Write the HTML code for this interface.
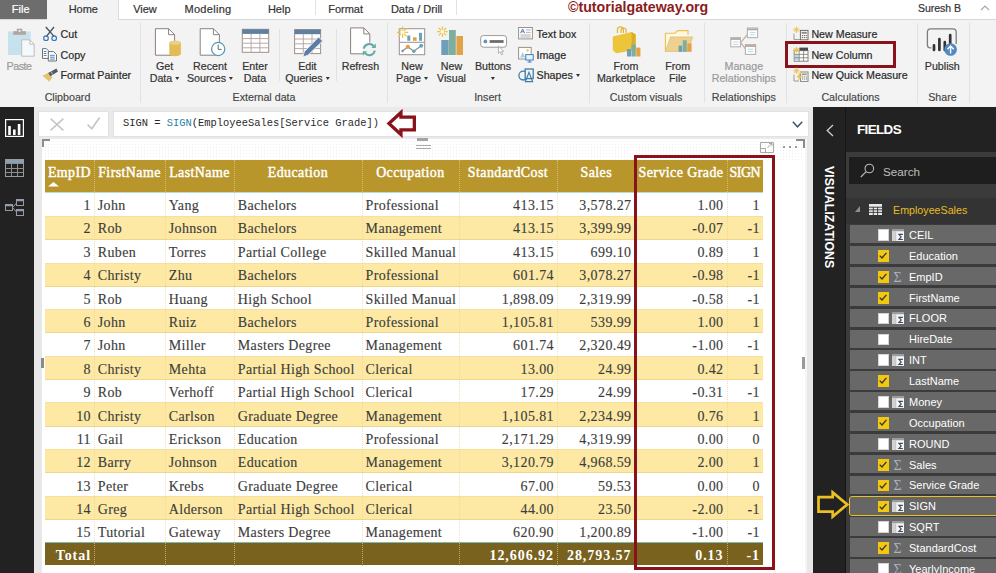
<!DOCTYPE html>
<html><head><meta charset="utf-8"><title>Power BI Desktop</title>
<style>
*{box-sizing:border-box;margin:0;padding:0}
html,body{width:996px;height:573px;overflow:hidden;background:#fff}
body{position:relative;font-family:"Liberation Sans",sans-serif;font-size:11px;color:#262626}
svg{position:absolute;overflow:visible}
/* tab row */
#tabs{position:absolute;left:0;top:0;width:996px;height:20px;background:#fff;border-bottom:1px solid #d8d8d8}
#tabs .t{position:absolute;top:1.5px;height:14px;line-height:14px;font-size:11px;text-align:center;color:#333;-webkit-text-stroke:.2px currentColor;white-space:nowrap;transform:translateX(-50%)}
#tab-file{position:absolute;left:0;top:0;width:47px;height:19px;background:#6d6d6d}
#tab-home{position:absolute;left:47px;top:0;width:71.5px;height:20px;background:#f3f3f3;border-right:1px solid #dcdcdc}
.tsep{position:absolute;top:0;width:1px;height:15px;background:#e2e2e2}
#wm{position:absolute;left:568px;top:-1px;height:16px;line-height:16px;font-size:14.2px;font-weight:bold;color:#8a1c1c;white-space:nowrap}
/* ribbon */
#ribbon{position:absolute;left:0;top:20px;width:996px;height:87px;background:#f3f3f3}
.gsep{position:absolute;top:3px;width:1px;height:80px;background:#dfe3e6}
.isep{position:absolute;top:9px;width:1px;height:52px;background:#dfe3e6}
.glabel{position:absolute;top:70px;font-size:10.7px;color:#444;-webkit-text-stroke:.15px #444;white-space:nowrap;line-height:14px;transform:translateX(-50%)}
.big{position:absolute;top:40px;font-size:10.7px;line-height:12.2px;color:#333;-webkit-text-stroke:.2px #333;text-align:center;white-space:nowrap;transform:translateX(-50%)}
.sm{position:absolute;font-size:10.7px;line-height:14px;color:#2a2a2a;-webkit-text-stroke:.2px #2a2a2a;white-space:nowrap}
.dim{color:#9a9a9a;-webkit-text-stroke:.2px #9a9a9a}
.car{display:inline-block;width:0;height:0;border-left:2.5px solid transparent;border-right:2.5px solid transparent;border-top:3px solid #333;vertical-align:middle;margin-left:3px;position:relative;top:-1px}
#hl{position:absolute;left:784.7px;top:20.8px;width:110.9px;height:27.1px;border:3px solid #8a121b}
/* left nav */
#nav{position:absolute;left:0;top:107px;width:34px;height:466px;background:#222}
/* formula bar */
#fbar{position:absolute;left:34px;top:107px;width:779px;height:32px;background:#eaeaea}
#fb1{position:absolute;left:4px;top:4px;width:71px;height:26px;background:#fff;border:1px solid #e2e2e2}
#fb2{position:absolute;left:79px;top:4px;width:696px;height:26px;background:#fff;border:1px solid #e2e2e2}
#ftext{position:absolute;left:9px;top:3.8px;font-family:"Liberation Mono",monospace;font-size:10.42px;line-height:14px;color:#2a2a2a;white-space:pre}
#ftext b{font-weight:normal;color:#2b7fa8}
/* canvas */
#gut{position:absolute;left:34px;top:139px;width:8px;height:434px;background:#e8e8e8}
#canvas{position:absolute;left:42px;top:139px;width:763px;height:434px;background:#fff}
#vscroll{position:absolute;left:805px;top:139px;width:8px;height:434px;background:#e8e8e8;border-left:2px solid #f6f6f6}
/* table */
#tbl{position:absolute;left:3px;top:21px;width:718px;font-family:"Liberation Serif",serif;font-size:14px;color:#3c3c3c}
.bgh{position:absolute;left:0;top:.4px;width:718px;height:31.75px;background:#b8962c}
.bgl{position:absolute;left:0;top:32.15px;width:718px;height:1.3px;background:#b4dbd5}
.st{position:absolute;left:0;width:718px;height:24.2px;background:#fde9a4;border-top:1px solid #f7e09f;border-bottom:1px solid #efd68f}
.bgt{position:absolute;left:0;top:382px;width:718px;height:23.3px;background:#79611e;border-top:1.4px solid #7fb9ae}
.vs{position:absolute;top:.4px;width:0;height:405.3px;border-left:1px dotted #e6d193;opacity:.65}
.r{position:absolute;left:0;width:718px;height:23.4px}
.r.hd{color:#fff;font-weight:bold;height:32px}
.r.tot{color:#fff;font-weight:bold;border-top:1px solid transparent}
.c{position:absolute;top:0;height:100%;line-height:27.6px;white-space:nowrap;letter-spacing:.34px;padding:0 3px 0 3.8px;overflow:hidden;-webkit-text-stroke:.12px currentColor}
.hd .c{-webkit-text-stroke:.45px #fff;font-weight:normal;line-height:26px;text-align:center;letter-spacing:.45px;font-size:13.9px;padding:0}
.tot .c{letter-spacing:.95px;line-height:23px;-webkit-text-stroke:0}
.c.n{text-align:right;letter-spacing:.4px}
.tot .c.n{letter-spacing:.95px}
/* right panes */
#vizpane{position:absolute;left:813px;top:107px;width:33px;height:466px;background:#222;border-right:1.5px solid #161616}
#fields{position:absolute;left:846px;top:107px;width:150px;height:466px;background:#3b3b3b;overflow:hidden}
</style></head><body>
<div id="tabs">
  <div id="tab-file"></div><div id="tab-home"></div>
  <div class="t" style="left:20.7px;color:#fff">File</div>
  <div class="t" style="left:83.3px">Home</div>
  <div class="t" style="left:145px">View</div>
  <div class="t" style="left:208px;letter-spacing:.3px">Modeling</div>
  <div class="t" style="left:279.2px">Help</div>
  <div class="tsep" style="left:315px"></div>
  <div class="t" style="left:345.6px">Format</div>
  <div class="t" style="left:416.6px">Data / Drill</div>
  <div class="tsep" style="left:456px"></div>
  <div id="wm">©tutorialgateway.org</div>
  <div class="t" style="left:939.5px;font-size:10.5px;top:.6px">Suresh B</div>
  <svg style="left:980px;top:5px" width="10" height="6" viewBox="0 0 10 6"><path d="M1 5 L5 1 L9 5" fill="none" stroke="#a8a8a8" stroke-width="1.2"/></svg>
</div>

<div id="ribbon">
  <!-- Clipboard -->
  <div class="big dim" style="left:19px;letter-spacing:-.5px">Paste</div>
  <div class="sm" style="left:60.5px;top:7px">Cut</div>
  <div class="sm" style="left:60.5px;top:27.8px">Copy</div>
  <div class="sm" style="left:60.5px;top:48.2px">Format Painter</div>
  <div class="glabel" style="left:67.5px">Clipboard</div>
  <div class="gsep" style="left:140px"></div>
  <!-- External data -->
  <div class="big" style="left:164.5px">Get<br>Data<span class="car"></span></div>
  <div class="big" style="left:210px">Recent<br>Sources<span class="car"></span></div>
  <div class="big" style="left:255px">Enter<br>Data</div>
  <div class="isep" style="left:279px"></div>
  <div class="big" style="left:307.4px">Edit<br>Queries<span class="car"></span></div>
  <div class="isep" style="left:336px"></div>
  <div class="big" style="left:360.4px">Refresh</div>
  <div class="glabel" style="left:264px">External data</div>
  <div class="gsep" style="left:387px"></div>
  <!-- Insert -->
  <div class="big" style="left:412px">New<br>Page<span class="car"></span></div>
  <div class="big" style="left:451.5px">New<br>Visual</div>
  <div class="big" style="left:493px">Buttons<br><span class="car" style="margin-left:0"></span></div>
  <div class="sm" style="left:536.5px;top:7px">Text box</div>
  <div class="sm" style="left:536.5px;top:27.8px">Image</div>
  <div class="sm" style="left:536.5px;top:48.2px">Shapes<span class="car" style="margin-left:3px"></span></div>
  <div class="glabel" style="left:487.5px">Insert</div>
  <div class="gsep" style="left:589px"></div>
  <!-- Custom visuals -->
  <div class="big" style="left:626px">From<br>Marketplace</div>
  <div class="big" style="left:677.7px">From<br>File</div>
  <div class="glabel" style="left:646px">Custom visuals</div>
  <div class="gsep" style="left:704px"></div>
  <!-- Relationships -->
  <div class="big dim" style="left:743.8px">Manage<br>Relationships</div>
  <div class="glabel" style="left:743.8px">Relationships</div>
  <div class="gsep" style="left:785.5px"></div>
  <!-- Calculations -->
  <div class="sm" style="left:811.4px;top:7px">New Measure</div>
  <div class="sm" style="left:811.4px;top:27.8px">New Column</div>
  <div class="sm" style="left:811.4px;top:48.2px">New Quick Measure</div>
  <div id="hl"></div>
  <div class="glabel" style="left:850.5px">Calculations</div>
  <div class="gsep" style="left:917px"></div>
  <!-- Share -->
  <div class="big" style="left:942.3px">Publish</div>
  <div class="glabel" style="left:942.4px">Share</div>
  <div class="gsep" style="left:969px"></div>
<svg id="rib-icons" style="left:0;top:0" width="996" height="87" viewBox="0 20 996 87">
<!-- Paste -->
<rect x="8" y="31.5" width="22.7" height="23.5" fill="#c7e2ef"/>
<rect x="13.2" y="31.2" width="12.7" height="3.6" fill="#b0a59f"/><rect x="16.8" y="28.7" width="5.5" height="3.5" fill="#b0a59f"/><rect x="18.6" y="30" width="1.9" height="1.8" fill="#f3f3f3"/>
<path d="M21.7 39.8 H29.8 L34.2 44.2 V56.2 H21.7 Z" fill="#f4fafc" stroke="#c4bcb8" stroke-width="1"/><path d="M29.8 39.8 V44.2 H34.2" fill="none" stroke="#c4bcb8" stroke-width="1"/>
<!-- Cut -->
<path d="M45.8 27 L54.3 36.6 M54 27 L46.2 36.6" stroke="#4a5560" stroke-width="1.4" fill="none"/>
<circle cx="46" cy="38.2" r="2.3" fill="none" stroke="#3b78b4" stroke-width="1.2"/><circle cx="54.2" cy="38.2" r="2.3" fill="none" stroke="#3b78b4" stroke-width="1.2"/>
<!-- Copy -->
<path d="M42.5 48.6 H46.3 L48.5 50.8 V58.4 H42.5 Z" fill="#fff" stroke="#6f6f6f" stroke-width="1"/>
<path d="M43.8 51.5 H46.5 M43.8 53.5 H46.5 M43.8 55.5 H46.5" stroke="#3b78b4" stroke-width=".9"/>
<path d="M48.3 51.6 H53.6 L56.5 54.5 V61 H48.3 Z" fill="#fff" stroke="#6f6f6f" stroke-width="1"/>
<path d="M50 55.3 H54.8 M50 57.2 H54.8 M50 59.1 H54.8" stroke="#3b78b4" stroke-width=".9"/>
<!-- Format painter -->
<path d="M42.5 75.8 L49 72.6 L52.4 77.6 L49.2 81.8 Z" fill="#e3c569"/>
<path d="M48.2 72.9 L56.4 68.6 L58 71.4 L50.4 76.2 Z" fill="#555b62"/>
<path d="M51 71.4 L52.6 74.4" stroke="#c9c9c9" stroke-width=".9"/>
<!-- Get Data -->
<path d="M155.4 28.7 H168.6 L174.6 34.7 V55.2 H155.4 Z" fill="#fff" stroke="#8d807c" stroke-width="1"/><path d="M168.6 28.7 V34.7 H174.6" fill="none" stroke="#8d807c" stroke-width="1"/>
<path d="M169.3 42.6 V54 A5.8 2.2 0 0 0 180.9 54 V42.6 Z" fill="#e2bd57"/><ellipse cx="175.1" cy="42.6" rx="5.8" ry="2.2" fill="#ecd088"/>
<!-- Recent Sources -->
<path d="M200.2 28.7 H213.4 L219.4 34.7 V55.2 H200.2 Z" fill="#fff" stroke="#8d807c" stroke-width="1"/><path d="M213.4 28.7 V34.7 H219.4" fill="none" stroke="#8d807c" stroke-width="1"/>
<circle cx="218.2" cy="49" r="6.6" fill="#fff" stroke="#4f9ab8" stroke-width="1.2"/><path d="M218.2 44.6 V49.4 H221.6" fill="none" stroke="#6b6b6b" stroke-width="1"/>
<!-- Enter Data -->
<rect x="242.3" y="29.3" width="26.4" height="23" fill="#fff" stroke="#9d8f89" stroke-width="1"/>
<rect x="242.3" y="29.3" width="26.4" height="4.6" fill="#5f7f9f"/>
<path d="M242.3 38.6 H268.7 M242.3 43.2 H268.7 M242.3 47.8 H268.7 M251.1 34 V52.3 M259.9 34 V52.3" stroke="#b7aaa3" stroke-width="1" fill="none"/>
<!-- Edit Queries -->
<rect x="294.6" y="29.6" width="26" height="24" fill="#fff" stroke="#9d8f89" stroke-width="1"/>
<rect x="294.6" y="29.6" width="26" height="4.6" fill="#5f7f9f"/>
<path d="M294.6 39 H320.6 M294.6 43.8 H320.6 M294.6 48.6 H320.6 M303.3 34.2 V53.6 M312 34.2 V53.6" stroke="#b7aaa3" stroke-width="1" fill="none"/>
<path d="M318.6 37 L322.6 41 L308 55.2 L302.8 57 L304.4 51.6 Z" fill="#5b7ea6" stroke="#f3f3f3" stroke-width=".9"/>
<!-- Refresh -->
<path d="M350.6 27.9 H363.8 L369.8 33.9 V53.8 H350.6 Z" fill="#fff" stroke="#8d807c" stroke-width="1"/><path d="M363.8 27.9 V33.9 H369.8" fill="none" stroke="#8d807c" stroke-width="1"/>
<circle cx="369.3" cy="49.6" r="7.2" fill="#f3f3f3"/>
<path d="M363.8 48.6 A5.6 5.6 0 0 1 373.6 46" fill="none" stroke="#62a9a6" stroke-width="2"/><path d="M375.8 43.6 V48 H371.4 Z" fill="#62a9a6"/>
<path d="M374.8 50.6 A5.6 5.6 0 0 1 365 53.2" fill="none" stroke="#62a9a6" stroke-width="2"/><path d="M362.8 55.6 V51.2 H367.2 Z" fill="#62a9a6"/>
<!-- New Page -->
<rect x="399.3" y="28.7" width="25.4" height="26" fill="#fff" stroke="#9d8f89" stroke-width="1"/>
<path d="M399.3 42.3 H424.7" stroke="#9d8f89" stroke-width="1"/>
<rect x="407.3" y="35.5" width="3" height="5.3" fill="#6aa5b6"/><rect x="413" y="37.3" width="3.6" height="3.5" fill="#e2a03f"/><rect x="419" y="32.8" width="3" height="8" fill="#6aa5b6"/>
<path d="M402.5 51 L407.8 46.8 L413.8 51.2 L421.2 45.8" fill="none" stroke="#7f8f9d" stroke-width="1.1"/>
<circle cx="407.8" cy="46.8" r="2.1" fill="#e2a03f"/><circle cx="413.8" cy="51.2" r="1.8" fill="#6aa5b6"/><circle cx="421.2" cy="45.8" r="2" fill="#6aa5b6"/><circle cx="402.5" cy="51" r="1.2" fill="#7f8f9d"/>
<g stroke="#e8c24f" stroke-width="1.2"><path d="M402.6 26.6 V38 M396.9 32.3 H408.3 M398.6 28.3 L406.6 36.3 M406.6 28.3 L398.6 36.3"/></g><circle cx="402.6" cy="32.3" r="2" fill="#fff7d8"/>
<!-- New Visual -->
<rect x="441.3" y="40" width="7.4" height="15" fill="#6d9fb8"/><rect x="449" y="30" width="6.8" height="25" fill="#7fae9e"/><rect x="456.4" y="36" width="6.6" height="19" fill="#e2a247"/>
<g stroke="#e8c24f" stroke-width="1.2"><path d="M442.4 26.4 V37 M437.1 31.7 H447.7 M438.7 28 L446.1 35.4 M446.1 28 L438.7 35.4"/></g><circle cx="442.4" cy="31.7" r="1.9" fill="#fff7d8"/>
<!-- Buttons -->
<rect x="480.7" y="35.6" width="25.8" height="11.6" rx="2.6" fill="#fff" stroke="#9a9a9a" stroke-width="1"/>
<circle cx="485.4" cy="41.4" r="1.9" fill="#5f93c0"/><rect x="489.6" y="40.1" width="14" height="2.8" fill="#6e6e6e"/>
<path d="M498.4 46.2 V53.4 L500.2 51.8 L501.6 54.8 L502.8 54.2 L501.5 51.4 L503.8 51.2 Z" fill="#fff" stroke="#9a9a9a" stroke-width=".7"/>
<!-- Text box -->
<rect x="518.6" y="27.5" width="13.8" height="11.4" fill="#fff" stroke="#9d8f89" stroke-width="1"/>
<path d="M520.6 33.2 L522.6 29 L524.6 33.2 M521.3 31.8 H523.9" fill="none" stroke="#3b6fb0" stroke-width=".9"/>
<path d="M526 30 H530.6 M526 32.4 H530.6 M520.4 35 H530.6 M520.4 37 H530.6" stroke="#9a9a9a" stroke-width=".8"/>
<!-- Image -->
<rect x="518.6" y="47.4" width="12.6" height="11.6" fill="#fff" stroke="#9d8f89" stroke-width="1"/>
<path d="M520 57.6 L522.8 52 L525.4 57.6 Z" fill="#a9cfe6"/><circle cx="527.6" cy="50.4" r="1.2" fill="#e8c24f"/>
<rect x="525.8" y="54.6" width="7.4" height="5.4" fill="#eaf4fb" stroke="#3b7fc0" stroke-width="1"/><path d="M527.6 62 H531.6 M529.6 60 V62" stroke="#3b7fc0" stroke-width="1"/>
<!-- Shapes -->
<circle cx="523.3" cy="75.6" r="4.4" fill="none" stroke="#3b7ea8" stroke-width="1.3"/>
<rect x="525.2" y="69" width="8" height="9.6" fill="#f3f3f3" stroke="#3b7ea8" stroke-width="1.3"/>
<path d="M529 72.4 L532.6 81.6 H525.4 Z" fill="none" stroke="#3b7ea8" stroke-width="1.2"/>
<!-- From Marketplace -->
<path d="M617.4 33 V29.8 A3 3 0 0 1 623.4 29.8 V33 M621 33 V30.6 A2.6 2.6 0 0 1 626.2 30.6 V33" fill="none" stroke="#e3b62f" stroke-width="1.2"/>
<path d="M612.8 36.6 L631.6 32 L635.6 34.4 V50 L616.4 53.2 L612.8 50.6 Z" fill="#ecc53a"/>
<path d="M631.6 32 L635.6 34.4 V50 L631.6 49 Z" fill="#d9ae2a"/>
<rect x="627" y="49" width="4" height="7.5" fill="#6d9fb8"/><rect x="631.4" y="44.6" width="4.4" height="11.9" fill="#7fae9e"/><rect x="636.2" y="47.6" width="4.2" height="8.9" fill="#e2a247"/>
<!-- From File -->
<path d="M665.4 51.4 V33.2 H675 L677.6 30.6 H688 V34.6" fill="#fff7e0" stroke="#e8c255" stroke-width="1.1"/>
<path d="M665.4 51.4 L670.6 37 H692.6 L687.6 51.4 Z" fill="#ecd193" stroke="#e3bf62" stroke-width=".8"/>
<rect x="678.6" y="45.6" width="3.6" height="6.2" fill="#6d9fb8"/><rect x="682.8" y="40.2" width="4" height="11.6" fill="#7fae9e"/><rect x="687.4" y="43.4" width="4.2" height="8.4" fill="#e2a247"/>
<!-- Manage Relationships -->
<path d="M740.6 42.6 L748.4 33.4 M740.6 42.6 L746.2 49.6" stroke="#b9b2ae" stroke-width="1.3" fill="none"/>
<rect x="730.8" y="37.6" width="9.6" height="9.2" fill="#fff" stroke="#b9b2ae" stroke-width="1.1"/><path d="M730.8 39 H740.4" stroke="#b0a8a4" stroke-width="1.8"/><path d="M733 42 H738.4 M733 44.4 H738.4" stroke="#b7dbea" stroke-width="1"/>
<rect x="747.4" y="28" width="10.2" height="9.6" fill="#fff" stroke="#b9b2ae" stroke-width="1.1"/><path d="M747.4 29.4 H757.6" stroke="#b0a8a4" stroke-width="1.8"/><path d="M749.8 32.4 H755.4 M749.8 34.8 H755.4" stroke="#b7dbea" stroke-width="1"/>
<rect x="745.4" y="44.6" width="10.2" height="9.8" fill="#fff" stroke="#b9b2ae" stroke-width="1.1"/><path d="M745.4 46 H755.6" stroke="#b0a8a4" stroke-width="1.8"/><path d="M747.8 49.2 H753.4 M747.8 51.6 H753.4" stroke="#b7dbea" stroke-width="1"/>
<!-- New Measure -->
<g stroke="#e8c24f" stroke-width=".9"><path d="M796.4 26.6 V33 M793.2 29.8 H799.6 M794.2 27.6 L798.6 32 M798.6 27.6 L794.2 32"/></g>
<path d="M794 33.6 V39.6 H800" fill="none" stroke="#9a9a9a" stroke-width="1"/>
<rect x="800.4" y="30.4" width="7.6" height="9.4" fill="#fff" stroke="#6f6a68" stroke-width="1"/><rect x="801.6" y="31.8" width="5.2" height="2" fill="#8c8c8c"/>
<path d="M801.8 35.6 H806.8 M801.8 37.6 H806.8" stroke="#555" stroke-width="1" stroke-dasharray="1.2 .7"/>
<!-- New Column -->
<g stroke="#e8c24f" stroke-width=".9"><path d="M796.4 47 V53.6 M793.1 50.3 H799.7 M794.1 48 L798.7 52.6 M798.7 48 L794.1 52.6"/></g>
<rect x="794.2" y="50.6" width="13.8" height="10.6" fill="#fff" stroke="#8b8480" stroke-width="1"/>
<rect x="799.4" y="47.6" width="8.6" height="3" fill="#4a4a4a"/>
<rect x="794.7" y="54.6" width="4.2" height="6.2" fill="#b7dbea"/>
<path d="M799.2 50.6 V61.2 M803.6 50.6 V61.2 M794.2 54.4 H808 M794.2 57.8 H808" stroke="#8b8480" stroke-width=".9"/>
<g stroke="#e8c24f" stroke-width=".9"><path d="M796.4 47 V53.6 M793.1 50.3 H799.7 M794.1 48 L798.7 52.6 M798.7 48 L794.1 52.6"/></g>
<!-- New Quick Measure -->
<g stroke="#e8c24f" stroke-width=".9"><path d="M796.4 67.6 V74 M793.2 70.8 H799.6 M794.2 68.6 L798.6 73 M798.6 68.6 L794.2 73"/></g>
<path d="M794 74.6 V81 H799" fill="none" stroke="#9a9a9a" stroke-width="1"/>
<rect x="800.6" y="72" width="7.4" height="9.4" fill="#fff" stroke="#8b8480" stroke-width="1"/><rect x="801.8" y="73.4" width="5" height="1.8" fill="#9a9a9a"/>
<path d="M802 77 H807 M802 79 H807" stroke="#777" stroke-width="1" stroke-dasharray="1.2 .7"/>
<path d="M800.6 71.6 L796.6 77.4 H799.2 L797 82.4 L802.4 75.6 H799.6 L802.4 71.6 Z" fill="#e8c24f"/>
<!-- Publish -->
<path d="M931.4 47.9 H930.6 A3.2 3.2 0 0 1 927.4 44.7 V32 A3.2 3.2 0 0 1 930.6 28.8 H953 A3.2 3.2 0 0 1 956.2 32 V44" fill="none" stroke="#7d7d7d" stroke-width="1.3"/>
<path d="M934 50 V45.4 M939.4 50 V39.2 M944.8 50 V42.2 M950.2 50 V35.2" stroke="#333" stroke-width="2.7" stroke-linecap="round"/>
<circle cx="950.6" cy="49.5" r="6.3" fill="#5189c2"/><path d="M950.6 53.6 V46.2 M947.5 49.2 L950.6 46 L953.7 49.2" fill="none" stroke="#fff" stroke-width="1.4"/>
</svg>

</div>
<div id="nav">
  <svg style="left:5px;top:12px" width="19" height="18" viewBox="0 0 19 18"><rect x="0.6" y="0.6" width="17.8" height="16.8" fill="none" stroke="#fff" stroke-width="1.2"/><rect x="3.2" y="7" width="2.6" height="9" fill="#fff"/><rect x="8" y="10.5" width="2.6" height="5.5" fill="#fff"/><rect x="12.8" y="5" width="2.6" height="11" fill="#fff"/></svg>
  <svg style="left:5px;top:52px" width="19" height="18" viewBox="0 0 19 18"><rect x="0.5" y="0.5" width="18" height="17" fill="none" stroke="#9a9a9a" stroke-width="1"/><rect x="1" y="1" width="17" height="3.5" fill="#8aa0b8"/><path d="M0.5 4.5 H18.5 M0.5 9.5 H18.5 M0.5 13.5 H18.5 M6.5 4.5 V17.5 M12.5 4.5 V17.5" stroke="#8f8f8f" stroke-width="1" fill="none"/></svg>
  <svg style="left:5px;top:92px" width="19" height="18" viewBox="0 0 19 18"><path d="M7.5 8.5 L12 3.5 M7.5 8.5 L12 13.5" stroke="#9a9a9a" stroke-width="1" fill="none"/><rect x="0.5" y="5.5" width="7" height="6" fill="#222" stroke="#9a9a9a"/><rect x="11.5" y="0.5" width="7" height="6" fill="#222" stroke="#9a9a9a"/><rect x="11.5" y="10.5" width="7" height="6" fill="#222" stroke="#9a9a9a"/><path d="M1 6.5 H7 M12 1.5 H18 M12 11.5 H18" stroke="#8aa0b8" stroke-width="1.4"/></svg>
</div>
<div id="fbar">
  <div id="fb1">
    <svg style="left:11.3px;top:5.6px" width="14" height="13" viewBox="0 0 14 13"><path d="M0.6 0.6 L13.4 12.4 M13.4 0.6 L0.6 12.4" stroke="#c6c6c6" stroke-width="1.6" fill="none"/></svg>
    <svg style="left:47.9px;top:5.3px" width="14" height="13" viewBox="0 0 14 13"><path d="M0.6 7.6 L4.8 11.8 L12.6 0.6" stroke="#c6c6c6" stroke-width="1.7" fill="none"/></svg>
  </div>
  <div id="fb2"><div id="ftext">SIGN = <b>SIGN</b>(EmployeeSales[Service Grade])</div>
    <svg style="left:0;top:0" width="310" height="26" viewBox="0 0 310 26"><path d="M286.95 0.5 L274.95 11.5 L286.95 22.5 L286.95 17.9 L300.35 17.9 L300.35 5.1 L286.95 5.1 Z" fill="#fff" stroke="#8a121b" stroke-width="3.3" stroke-linejoin="miter"/></svg>
    <svg style="left:677.8px;top:8.8px" width="11" height="7" viewBox="0 0 11 7"><path d="M0.8 0.8 L5.5 5.8 L10.2 0.8" stroke="#44546a" stroke-width="1.5" fill="none"/></svg>
  </div>
</div>
<div id="gut"></div>
<div id="canvas">
  <div style="position:absolute;left:2px;top:1px;width:759px;height:20px;background-image:radial-gradient(circle,#efefef .6px,transparent .8px);background-size:3px 3px"></div>
  <div style="position:absolute;left:0;top:0;width:8px;height:2px;background:#8c8c8c"></div><div style="position:absolute;left:0;top:0;width:2px;height:8px;background:#8c8c8c"></div>
  <div style="position:absolute;left:754px;top:0;width:9px;height:2px;background:#8c8c8c"></div><div style="position:absolute;left:761px;top:0;width:2px;height:9px;background:#8c8c8c"></div>
  <div style="position:absolute;left:375px;top:-.6px;width:11px;height:2.4px;background:#a4a4a4"></div>
  <div style="position:absolute;left:373.5px;top:5.8px;width:15px;height:1px;background:#a8a8a8"></div>
  <div style="position:absolute;left:373.5px;top:9.2px;width:15px;height:1px;background:#a8a8a8"></div>
  <svg style="left:718px;top:3px" width="14" height="11" viewBox="0 0 14 11"><path d="M0.5 0.5 H13.5 V10.5 H0.5 Z M0.5 6.5 H5.5 V10.5 M7.5 5.5 L12 1.5 M9 1.5 H12 V4.2" fill="none" stroke="#a9a9a9" stroke-width="1"/></svg>
  <div style="position:absolute;left:741px;top:7px;width:2px;height:2px;background:#9a9a9a;box-shadow:6px 0 0 #9a9a9a,12px 0 0 #9a9a9a"></div>
<div id="tbl">
<div class="bgh"></div><div class="bgl"></div>
<div class="st" style="top:55.92px"></div><div class="st" style="top:102.56px"></div><div class="st" style="top:149.20px"></div><div class="st" style="top:195.84px"></div><div class="st" style="top:242.48px"></div><div class="st" style="top:289.12px"></div><div class="st" style="top:335.76px"></div>
<div class="bgt"></div>
<div class="vs" style="left:49px"></div><div class="vs" style="left:120px"></div><div class="vs" style="left:189px"></div><div class="vs" style="left:316.8px"></div><div class="vs" style="left:414px"></div><div class="vs" style="left:512px"></div><div class="vs" style="left:590.5px"></div><div class="vs" style="left:681.5px"></div>
<div class="r hd" style="top:0"><div class="c" style="left:0px;width:49px">EmpID</div><div class="c" style="left:49px;width:71px">FirstName</div><div class="c" style="left:120px;width:69px">LastName</div><div class="c" style="left:189px;width:127.8px">Education</div><div class="c" style="left:316.8px;width:97.2px">Occupation</div><div class="c" style="left:414px;width:98px">StandardCost</div><div class="c" style="left:512px;width:78.5px">Sales</div><div class="c" style="left:590.5px;width:91px">Service Grade</div><div class="c" style="left:681.5px;width:36.5px;letter-spacing:-.5px">SIGN</div></div>
<div class="r" style="top:32.00px"><div class="c n" style="left:0px;width:49px">1</div><div class="c" style="left:49px;width:71px">John</div><div class="c" style="left:120px;width:69px">Yang</div><div class="c" style="left:189px;width:127.8px">Bachelors</div><div class="c" style="left:316.8px;width:97.2px">Professional</div><div class="c n" style="left:414px;width:98px">413.15</div><div class="c n" style="left:512px;width:78.5px;padding-right:4px">3,578.27</div><div class="c n" style="left:590.5px;width:91px">1.00</div><div class="c n" style="left:681.5px;width:36.5px">1</div></div>
<div class="r" style="top:55.39px"><div class="c n" style="left:0px;width:49px">2</div><div class="c" style="left:49px;width:71px">Rob</div><div class="c" style="left:120px;width:69px">Johnson</div><div class="c" style="left:189px;width:127.8px">Bachelors</div><div class="c" style="left:316.8px;width:97.2px">Management</div><div class="c n" style="left:414px;width:98px">413.15</div><div class="c n" style="left:512px;width:78.5px;padding-right:4px">3,399.99</div><div class="c n" style="left:590.5px;width:91px">-0.07</div><div class="c n" style="left:681.5px;width:36.5px">-1</div></div>
<div class="r" style="top:78.78px"><div class="c n" style="left:0px;width:49px">3</div><div class="c" style="left:49px;width:71px">Ruben</div><div class="c" style="left:120px;width:69px">Torres</div><div class="c" style="left:189px;width:127.8px">Partial College</div><div class="c" style="left:316.8px;width:97.2px">Skilled Manual</div><div class="c n" style="left:414px;width:98px">413.15</div><div class="c n" style="left:512px;width:78.5px;padding-right:4px">699.10</div><div class="c n" style="left:590.5px;width:91px">0.89</div><div class="c n" style="left:681.5px;width:36.5px">1</div></div>
<div class="r" style="top:102.17px"><div class="c n" style="left:0px;width:49px">4</div><div class="c" style="left:49px;width:71px">Christy</div><div class="c" style="left:120px;width:69px">Zhu</div><div class="c" style="left:189px;width:127.8px">Bachelors</div><div class="c" style="left:316.8px;width:97.2px">Professional</div><div class="c n" style="left:414px;width:98px">601.74</div><div class="c n" style="left:512px;width:78.5px;padding-right:4px">3,078.27</div><div class="c n" style="left:590.5px;width:91px">-0.98</div><div class="c n" style="left:681.5px;width:36.5px">-1</div></div>
<div class="r" style="top:125.56px"><div class="c n" style="left:0px;width:49px">5</div><div class="c" style="left:49px;width:71px">Rob</div><div class="c" style="left:120px;width:69px">Huang</div><div class="c" style="left:189px;width:127.8px">High School</div><div class="c" style="left:316.8px;width:97.2px">Skilled Manual</div><div class="c n" style="left:414px;width:98px">1,898.09</div><div class="c n" style="left:512px;width:78.5px;padding-right:4px">2,319.99</div><div class="c n" style="left:590.5px;width:91px">-0.58</div><div class="c n" style="left:681.5px;width:36.5px">-1</div></div>
<div class="r" style="top:148.95px"><div class="c n" style="left:0px;width:49px">6</div><div class="c" style="left:49px;width:71px">John</div><div class="c" style="left:120px;width:69px">Ruiz</div><div class="c" style="left:189px;width:127.8px">Bachelors</div><div class="c" style="left:316.8px;width:97.2px">Professional</div><div class="c n" style="left:414px;width:98px">1,105.81</div><div class="c n" style="left:512px;width:78.5px;padding-right:4px">539.99</div><div class="c n" style="left:590.5px;width:91px">1.00</div><div class="c n" style="left:681.5px;width:36.5px">1</div></div>
<div class="r" style="top:172.34px"><div class="c n" style="left:0px;width:49px">7</div><div class="c" style="left:49px;width:71px">John</div><div class="c" style="left:120px;width:69px">Miller</div><div class="c" style="left:189px;width:127.8px">Masters Degree</div><div class="c" style="left:316.8px;width:97.2px">Management</div><div class="c n" style="left:414px;width:98px">601.74</div><div class="c n" style="left:512px;width:78.5px;padding-right:4px">2,320.49</div><div class="c n" style="left:590.5px;width:91px">-1.00</div><div class="c n" style="left:681.5px;width:36.5px">-1</div></div>
<div class="r" style="top:195.73px"><div class="c n" style="left:0px;width:49px">8</div><div class="c" style="left:49px;width:71px">Christy</div><div class="c" style="left:120px;width:69px">Mehta</div><div class="c" style="left:189px;width:127.8px">Partial High School</div><div class="c" style="left:316.8px;width:97.2px">Clerical</div><div class="c n" style="left:414px;width:98px">13.00</div><div class="c n" style="left:512px;width:78.5px;padding-right:4px">24.99</div><div class="c n" style="left:590.5px;width:91px">0.42</div><div class="c n" style="left:681.5px;width:36.5px">1</div></div>
<div class="r" style="top:219.12px"><div class="c n" style="left:0px;width:49px">9</div><div class="c" style="left:49px;width:71px">Rob</div><div class="c" style="left:120px;width:69px">Verhoff</div><div class="c" style="left:189px;width:127.8px">Partial High School</div><div class="c" style="left:316.8px;width:97.2px">Clerical</div><div class="c n" style="left:414px;width:98px">17.29</div><div class="c n" style="left:512px;width:78.5px;padding-right:4px">24.99</div><div class="c n" style="left:590.5px;width:91px">-0.31</div><div class="c n" style="left:681.5px;width:36.5px">-1</div></div>
<div class="r" style="top:242.51px"><div class="c n" style="left:0px;width:49px">10</div><div class="c" style="left:49px;width:71px">Christy</div><div class="c" style="left:120px;width:69px">Carlson</div><div class="c" style="left:189px;width:127.8px">Graduate Degree</div><div class="c" style="left:316.8px;width:97.2px">Management</div><div class="c n" style="left:414px;width:98px">1,105.81</div><div class="c n" style="left:512px;width:78.5px;padding-right:4px">2,234.99</div><div class="c n" style="left:590.5px;width:91px">0.76</div><div class="c n" style="left:681.5px;width:36.5px">1</div></div>
<div class="r" style="top:265.90px"><div class="c n" style="left:0px;width:49px">11</div><div class="c" style="left:49px;width:71px">Gail</div><div class="c" style="left:120px;width:69px">Erickson</div><div class="c" style="left:189px;width:127.8px">Education</div><div class="c" style="left:316.8px;width:97.2px">Professional</div><div class="c n" style="left:414px;width:98px">2,171.29</div><div class="c n" style="left:512px;width:78.5px;padding-right:4px">4,319.99</div><div class="c n" style="left:590.5px;width:91px">0.00</div><div class="c n" style="left:681.5px;width:36.5px">0</div></div>
<div class="r" style="top:289.29px"><div class="c n" style="left:0px;width:49px">12</div><div class="c" style="left:49px;width:71px">Barry</div><div class="c" style="left:120px;width:69px">Johnson</div><div class="c" style="left:189px;width:127.8px">Education</div><div class="c" style="left:316.8px;width:97.2px">Management</div><div class="c n" style="left:414px;width:98px">3,120.79</div><div class="c n" style="left:512px;width:78.5px;padding-right:4px">4,968.59</div><div class="c n" style="left:590.5px;width:91px">2.00</div><div class="c n" style="left:681.5px;width:36.5px">1</div></div>
<div class="r" style="top:312.68px"><div class="c n" style="left:0px;width:49px">13</div><div class="c" style="left:49px;width:71px">Peter</div><div class="c" style="left:120px;width:69px">Krebs</div><div class="c" style="left:189px;width:127.8px">Graduate Degree</div><div class="c" style="left:316.8px;width:97.2px">Clerical</div><div class="c n" style="left:414px;width:98px">67.00</div><div class="c n" style="left:512px;width:78.5px;padding-right:4px">59.53</div><div class="c n" style="left:590.5px;width:91px">0.00</div><div class="c n" style="left:681.5px;width:36.5px">0</div></div>
<div class="r" style="top:336.07px"><div class="c n" style="left:0px;width:49px">14</div><div class="c" style="left:49px;width:71px">Greg</div><div class="c" style="left:120px;width:69px">Alderson</div><div class="c" style="left:189px;width:127.8px">Partial High School</div><div class="c" style="left:316.8px;width:97.2px">Clerical</div><div class="c n" style="left:414px;width:98px">44.00</div><div class="c n" style="left:512px;width:78.5px;padding-right:4px">23.50</div><div class="c n" style="left:590.5px;width:91px">-2.00</div><div class="c n" style="left:681.5px;width:36.5px">-1</div></div>
<div class="r" style="top:359.46px"><div class="c n" style="left:0px;width:49px">15</div><div class="c" style="left:49px;width:71px">Tutorial</div><div class="c" style="left:120px;width:69px">Gateway</div><div class="c" style="left:189px;width:127.8px">Masters Degree</div><div class="c" style="left:316.8px;width:97.2px">Management</div><div class="c n" style="left:414px;width:98px">620.90</div><div class="c n" style="left:512px;width:78.5px;padding-right:4px">1,200.89</div><div class="c n" style="left:590.5px;width:91px">-1.00</div><div class="c n" style="left:681.5px;width:36.5px">-1</div></div>
<div class="r tot" style="top:382.85px"><div class="c n" style="left:0px;width:49px">Total</div><div class="c n" style="left:49px;width:71px"></div><div class="c n" style="left:120px;width:69px"></div><div class="c n" style="left:189px;width:127.8px"></div><div class="c n" style="left:316.8px;width:97.2px"></div><div class="c n" style="left:414px;width:98px">12,606.92</div><div class="c n" style="left:512px;width:78.5px;padding-right:4px">28,793.57</div><div class="c n" style="left:590.5px;width:91px">0.13</div><div class="c n" style="left:681.5px;width:36.5px">-1</div></div>
</div>

  <svg style="left:5.6px;top:43.2px" width="11" height="4.6" viewBox="0 0 11 4.6"><path d="M0 4.6 L5.5 0 L11 4.6 Z" fill="#fff"/></svg>
  <div style="position:absolute;left:592.3px;top:16px;width:140.7px;height:415px;border:3.2px solid #8a121b"></div>
  <div style="position:absolute;left:760px;top:218px;width:4px;height:12px;background:#9a9a9a"></div>
  <div style="position:absolute;left:-1px;top:218.6px;width:3px;height:10.6px;background:#8c8c8c"></div>
</div>
<div id="vscroll"></div>
<style>
.fr{position:absolute;left:4px;width:150px;height:18.2px;background:#686868}
.cb{position:absolute;left:27.6px;top:4px;width:11.6px;height:11.8px;background:#fff;border:1px solid #d8d2d2}
.cb.on{background:#f2c811;border:none}
.fn{position:absolute;left:59px;top:2.8px;font-size:11px;line-height:14px;color:#fff;white-space:nowrap}
.sg{position:absolute;left:43.5px;top:2.7px;font-size:14px;line-height:15px;color:#a9b4c0;font-family:"Liberation Serif",serif}
</style>
<div id="vizpane">
  <svg style="left:13px;top:17px" width="8" height="13" viewBox="0 0 8 13"><path d="M7 1 L1.2 6.5 L7 12" fill="none" stroke="#cfcfcf" stroke-width="1.3"/></svg>
  <div style="position:absolute;left:8px;top:59.2px;width:16px;height:100px;writing-mode:vertical-rl;font-size:12.3px;font-weight:bold;color:#fff;letter-spacing:.05px;line-height:16px;white-space:nowrap">VISUALIZATIONS</div>
</div>
<div id="fields">
  <div style="position:absolute;left:0;top:0;width:150px;height:45px;background:#222"></div>
  <div style="position:absolute;left:11px;top:14.5px;font-size:13.4px;font-weight:bold;color:#fff;line-height:16px;letter-spacing:-.6px">FIELDS</div>
  <div style="position:absolute;left:3px;top:50px;width:150px;height:27px;background:#1e1e1e"></div>
  <svg style="left:14px;top:56px" width="15" height="15" viewBox="0 0 15 15"><circle cx="9.3" cy="5.5" r="4.3" fill="none" stroke="#b9b9b9" stroke-width="1.1"/><path d="M6.2 8.6 L0.8 14" stroke="#b9b9b9" stroke-width="1.2"/></svg>
  <div style="position:absolute;left:37px;top:56.5px;font-size:11.7px;line-height:15px;color:#bfbfbf">Search</div>
  <div style="position:absolute;left:0;top:91px;width:150px;height:26px;background:#333"></div>
  <svg style="left:9px;top:99px" width="5" height="6" viewBox="0 0 5 6"><path d="M5 0 V6 H0 Z" fill="#8f8f8f"/></svg>
  <svg style="left:23px;top:97px" width="13" height="11" viewBox="0 0 13 11"><rect width="13" height="11" fill="#e9e9e9"/><path d="M0 3.2 H13 M0 5.8 H13 M0 8.4 H13 M4.3 3 V11 M8.6 3 V11" stroke="#333" stroke-width=".9"/></svg>
  <div style="position:absolute;left:47px;top:96px;font-size:10.7px;line-height:15px;color:#e9bc25">EmployeeSales</div>
  <div class="fr" style="top:118.20px"><div class="cb"></div><svg style="left:42px;top:3.8px" width="12" height="12" viewBox="0 0 12 12"><rect width="12" height="12" fill="#dcdcdc"/><rect width="12" height="2.1" fill="#9c9c9c"/><rect x="0.3" y="2.1" width="3.4" height="9.9" fill="#d0d0d0"/><path d="M3.9 2.1 V12" stroke="#b2b2b2" stroke-width=".6"/><rect x="4.4" y="2.7" width="7.6" height="9" fill="#f6f6f6"/><path d="M10.9 5.3 H6.9 L9.2 7.9 L6.9 10.5 H10.9" fill="none" stroke="#3b4a63" stroke-width="1.15"/></svg><div class="fn">CEIL</div></div>
  <div class="fr" style="top:139.07px"><div class="cb on"><svg style="left:1.5px;top:2px" width="8" height="7" viewBox="0 0 8 7"><path d="M0.7 3.6 L3 6 L7.4 0.8" fill="none" stroke="#333" stroke-width="1.3"/></svg></div><div class="fn">Education</div></div>
  <div class="fr" style="top:159.95px"><div class="cb on"><svg style="left:1.5px;top:2px" width="8" height="7" viewBox="0 0 8 7"><path d="M0.7 3.6 L3 6 L7.4 0.8" fill="none" stroke="#333" stroke-width="1.3"/></svg></div><div class="sg">Σ</div><div class="fn">EmpID</div></div>
  <div class="fr" style="top:180.82px"><div class="cb on"><svg style="left:1.5px;top:2px" width="8" height="7" viewBox="0 0 8 7"><path d="M0.7 3.6 L3 6 L7.4 0.8" fill="none" stroke="#333" stroke-width="1.3"/></svg></div><div class="fn">FirstName</div></div>
  <div class="fr" style="top:201.70px"><div class="cb"></div><svg style="left:42px;top:3.8px" width="12" height="12" viewBox="0 0 12 12"><rect width="12" height="12" fill="#dcdcdc"/><rect width="12" height="2.1" fill="#9c9c9c"/><rect x="0.3" y="2.1" width="3.4" height="9.9" fill="#d0d0d0"/><path d="M3.9 2.1 V12" stroke="#b2b2b2" stroke-width=".6"/><rect x="4.4" y="2.7" width="7.6" height="9" fill="#f6f6f6"/><path d="M10.9 5.3 H6.9 L9.2 7.9 L6.9 10.5 H10.9" fill="none" stroke="#3b4a63" stroke-width="1.15"/></svg><div class="fn">FLOOR</div></div>
  <div class="fr" style="top:222.57px"><div class="cb"></div><div class="fn">HireDate</div></div>
  <div class="fr" style="top:243.45px"><div class="cb"></div><svg style="left:42px;top:3.8px" width="12" height="12" viewBox="0 0 12 12"><rect width="12" height="12" fill="#dcdcdc"/><rect width="12" height="2.1" fill="#9c9c9c"/><rect x="0.3" y="2.1" width="3.4" height="9.9" fill="#d0d0d0"/><path d="M3.9 2.1 V12" stroke="#b2b2b2" stroke-width=".6"/><rect x="4.4" y="2.7" width="7.6" height="9" fill="#f6f6f6"/><path d="M10.9 5.3 H6.9 L9.2 7.9 L6.9 10.5 H10.9" fill="none" stroke="#3b4a63" stroke-width="1.15"/></svg><div class="fn">INT</div></div>
  <div class="fr" style="top:264.32px"><div class="cb on"><svg style="left:1.5px;top:2px" width="8" height="7" viewBox="0 0 8 7"><path d="M0.7 3.6 L3 6 L7.4 0.8" fill="none" stroke="#333" stroke-width="1.3"/></svg></div><div class="fn">LastName</div></div>
  <div class="fr" style="top:285.20px"><div class="cb"></div><svg style="left:42px;top:3.8px" width="12" height="12" viewBox="0 0 12 12"><rect width="12" height="12" fill="#dcdcdc"/><rect width="12" height="2.1" fill="#9c9c9c"/><rect x="0.3" y="2.1" width="3.4" height="9.9" fill="#d0d0d0"/><path d="M3.9 2.1 V12" stroke="#b2b2b2" stroke-width=".6"/><rect x="4.4" y="2.7" width="7.6" height="9" fill="#f6f6f6"/><path d="M10.9 5.3 H6.9 L9.2 7.9 L6.9 10.5 H10.9" fill="none" stroke="#3b4a63" stroke-width="1.15"/></svg><div class="fn">Money</div></div>
  <div class="fr" style="top:306.07px"><div class="cb on"><svg style="left:1.5px;top:2px" width="8" height="7" viewBox="0 0 8 7"><path d="M0.7 3.6 L3 6 L7.4 0.8" fill="none" stroke="#333" stroke-width="1.3"/></svg></div><div class="fn">Occupation</div></div>
  <div class="fr" style="top:326.95px"><div class="cb"></div><svg style="left:42px;top:3.8px" width="12" height="12" viewBox="0 0 12 12"><rect width="12" height="12" fill="#dcdcdc"/><rect width="12" height="2.1" fill="#9c9c9c"/><rect x="0.3" y="2.1" width="3.4" height="9.9" fill="#d0d0d0"/><path d="M3.9 2.1 V12" stroke="#b2b2b2" stroke-width=".6"/><rect x="4.4" y="2.7" width="7.6" height="9" fill="#f6f6f6"/><path d="M10.9 5.3 H6.9 L9.2 7.9 L6.9 10.5 H10.9" fill="none" stroke="#3b4a63" stroke-width="1.15"/></svg><div class="fn">ROUND</div></div>
  <div class="fr" style="top:347.82px"><div class="cb on"><svg style="left:1.5px;top:2px" width="8" height="7" viewBox="0 0 8 7"><path d="M0.7 3.6 L3 6 L7.4 0.8" fill="none" stroke="#333" stroke-width="1.3"/></svg></div><div class="sg">Σ</div><div class="fn">Sales</div></div>
  <div class="fr" style="top:368.70px"><div class="cb on"><svg style="left:1.5px;top:2px" width="8" height="7" viewBox="0 0 8 7"><path d="M0.7 3.6 L3 6 L7.4 0.8" fill="none" stroke="#333" stroke-width="1.3"/></svg></div><div class="sg">Σ</div><div class="fn">Service Grade</div></div>
  <div class="fr" style="top:389.57px;outline:1.3px solid #ecc022;outline-offset:0;border-radius:2px;background:#666"><div class="cb on"><svg style="left:1.5px;top:2px" width="8" height="7" viewBox="0 0 8 7"><path d="M0.7 3.6 L3 6 L7.4 0.8" fill="none" stroke="#333" stroke-width="1.3"/></svg></div><svg style="left:42px;top:3.8px" width="12" height="12" viewBox="0 0 12 12"><rect width="12" height="12" fill="#dcdcdc"/><rect width="12" height="2.1" fill="#9c9c9c"/><rect x="0.3" y="2.1" width="3.4" height="9.9" fill="#d0d0d0"/><path d="M3.9 2.1 V12" stroke="#b2b2b2" stroke-width=".6"/><rect x="4.4" y="2.7" width="7.6" height="9" fill="#f6f6f6"/><path d="M10.9 5.3 H6.9 L9.2 7.9 L6.9 10.5 H10.9" fill="none" stroke="#3b4a63" stroke-width="1.15"/></svg><div class="fn">SIGN</div></div>
  <div class="fr" style="top:410.45px"><div class="cb"></div><svg style="left:42px;top:3.8px" width="12" height="12" viewBox="0 0 12 12"><rect width="12" height="12" fill="#dcdcdc"/><rect width="12" height="2.1" fill="#9c9c9c"/><rect x="0.3" y="2.1" width="3.4" height="9.9" fill="#d0d0d0"/><path d="M3.9 2.1 V12" stroke="#b2b2b2" stroke-width=".6"/><rect x="4.4" y="2.7" width="7.6" height="9" fill="#f6f6f6"/><path d="M10.9 5.3 H6.9 L9.2 7.9 L6.9 10.5 H10.9" fill="none" stroke="#3b4a63" stroke-width="1.15"/></svg><div class="fn">SQRT</div></div>
  <div class="fr" style="top:431.33px"><div class="cb on"><svg style="left:1.5px;top:2px" width="8" height="7" viewBox="0 0 8 7"><path d="M0.7 3.6 L3 6 L7.4 0.8" fill="none" stroke="#333" stroke-width="1.3"/></svg></div><div class="sg">Σ</div><div class="fn">StandardCost</div></div>
  <div class="fr" style="top:452.20px"><div class="cb"></div><div class="sg">Σ</div><div class="fn">YearlyIncome</div></div>
</div>
<svg style="left:0;top:0" width="996" height="573" viewBox="0 0 996 573"><path d="M818.5 497.2 H832.7 V492.4 L847.2 504.5 L832.7 516.6 V511.7 H818.5 Z" fill="none" stroke="#ecc022" stroke-width="2.7" stroke-linejoin="miter"/></svg>
</body></html>
